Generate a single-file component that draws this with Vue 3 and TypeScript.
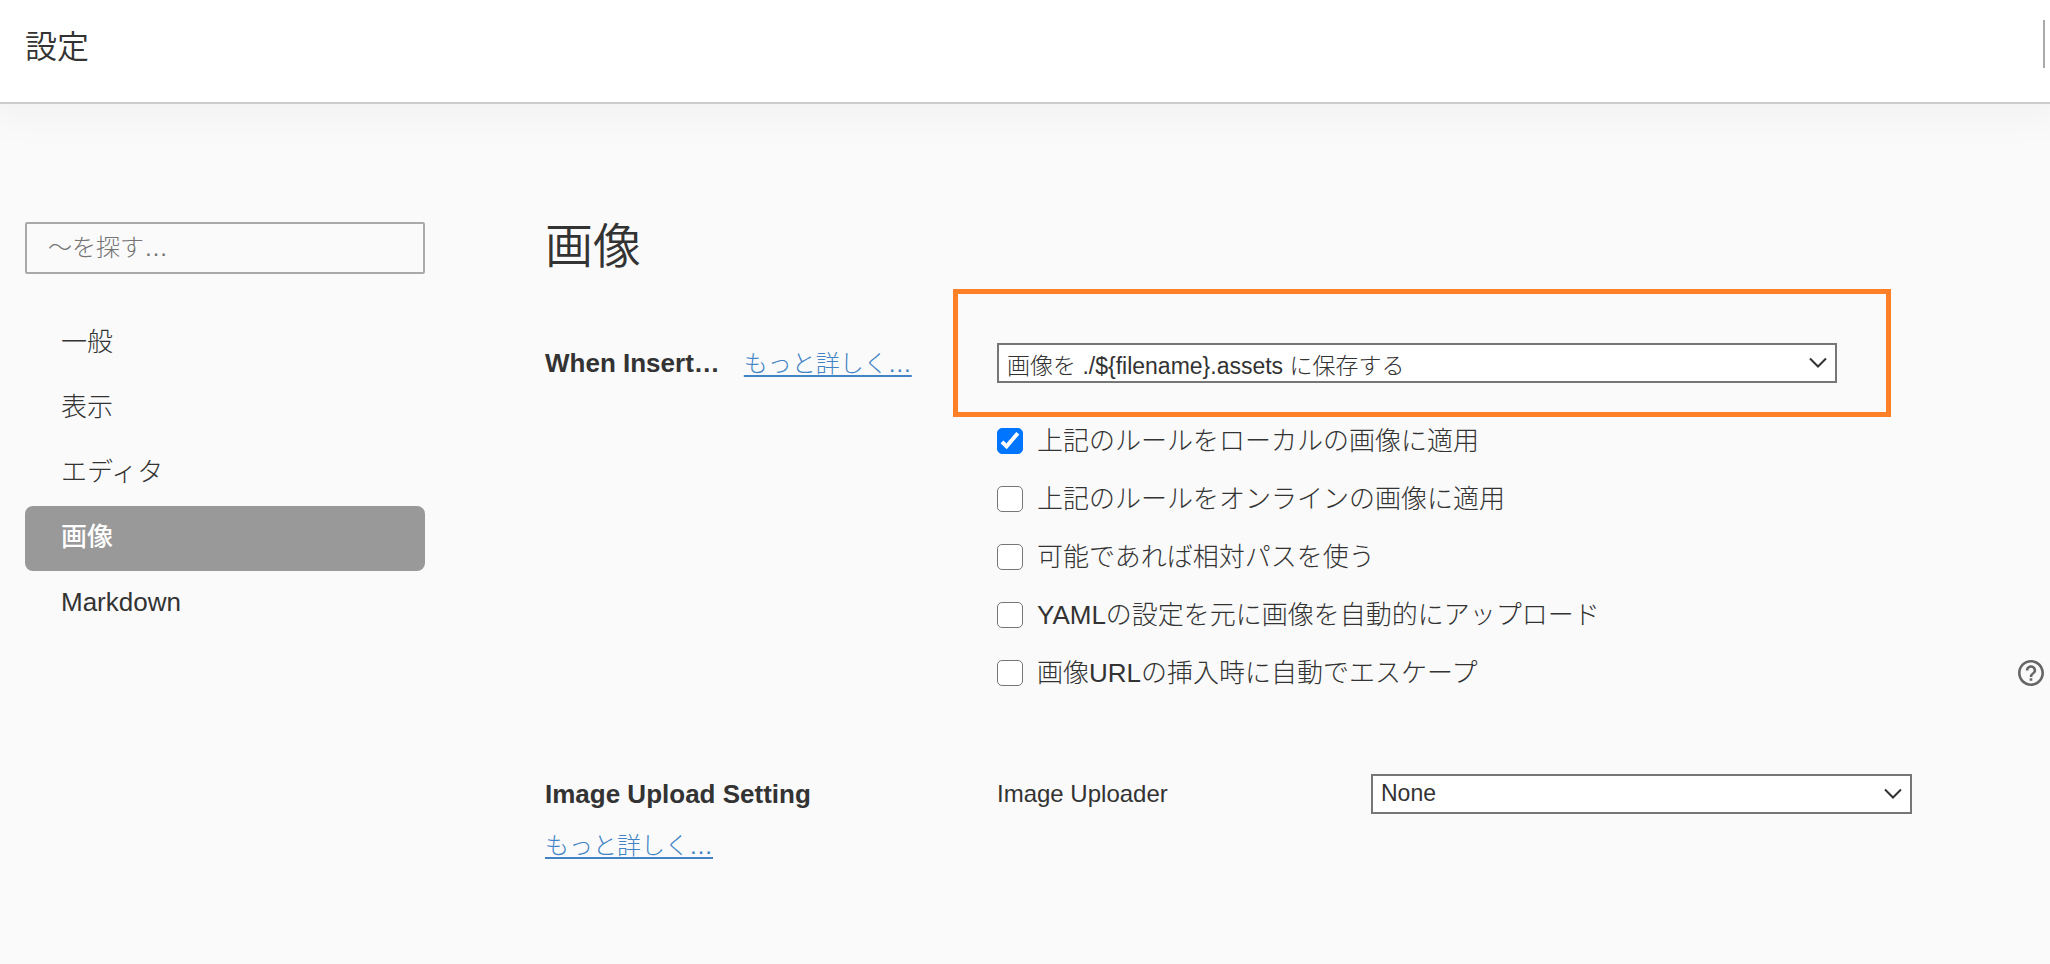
<script setup lang="ts">
import { ref } from 'vue'

interface Rule {
  id: string
  label: string
  checked: boolean
  help?: boolean
}

const navItems: string[] = ['一般', '表示', 'エディタ', '画像', 'Markdown']
const current = ref<string>('画像')
const query = ref<string>('')
const insertAction = ref<string>('assets')
const uploader = ref<string>('none')

const rules = ref<Rule[]>([
  { id: 'rule-local', label: '上記のルールをローカルの画像に適用', checked: true },
  { id: 'rule-online', label: '上記のルールをオンラインの画像に適用', checked: false },
  { id: 'rule-relative', label: '可能であれば相対パスを使う', checked: false },
  { id: 'rule-yaml', label: 'YAMLの設定を元に画像を自動的にアップロード', checked: false },
  { id: 'rule-escape', label: '画像URLの挿入時に自動でエスケープ', checked: false, help: true },
])
</script>

<template>
  <div class="page">
    <header class="topbar">
      <span class="topbar-title">設定</span>
      <span class="topbar-divider"></span>
    </header>

    <div class="body">
      <aside class="sidebar">
        <input v-model="query" class="search" type="text" placeholder="～を探す…" aria-label="～を探す…" />
        <nav class="nav">
          <button
            v-for="item in navItems"
            :key="item"
            type="button"
            class="nav-item"
            :class="{ active: item === current }"
            @click="current = item"
          >
            {{ item }}
          </button>
        </nav>
      </aside>

      <main class="content">
        <h1 class="heading">画像</h1>

        <section class="group">
          <div class="group-label inline">
            <label class="group-title" for="insert-action">When Insert…</label>
            <a class="more" href="#insert">もっと詳しく…</a>
          </div>
          <div class="group-body">
            <div class="select-box insert">
              <select id="insert-action" v-model="insertAction" class="select">
                <option value="assets">画像を ./${filename}.assets に保存する</option>
              </select>
              <svg class="chevron" viewBox="0 0 18 12" aria-hidden="true">
                <path d="M1 1.5 L9 9.5 L17 1.5" />
              </svg>
              <span class="highlight"></span>
            </div>

            <div class="rules">
              <div v-for="rule in rules" :key="rule.id" class="rule">
                <span class="check">
                  <input :id="rule.id" v-model="rule.checked" type="checkbox" class="check-input" />
                  <svg v-show="rule.checked" class="check-mark" viewBox="0 0 26 26" aria-hidden="true">
                    <path d="M5 13.8 L9.6 18.4 L20.8 5.2" />
                  </svg>
                </span>
                <label :for="rule.id">{{ rule.label }}</label>
                <button v-if="rule.help" type="button" class="help" aria-label="Help">
                  <svg viewBox="2 2 20 20" aria-hidden="true">
                    <path
                      d="M11 18h2v-2h-2v2zm1-16C6.480 2 2 6.480 2 12s4.480 10 10 10 10-4.480 10-10S17.520 2 12 2zm0 18c-4.410 0-8-3.590-8-8s3.590-8 8-8 8 3.590 8 8-3.590 8-8 8zm0-14c-2.210 0-4 1.790-4 4h2c0-1.100.9-2 2-2s2 .9 2 2c0 2-3 1.750-3 5h2c0-2.250 3-2.500 3-5 0-2.210-1.790-4-4-4z"
                    />
                  </svg>
                </button>
              </div>
            </div>
          </div>
        </section>

        <section class="group upload">
          <div class="group-label">
            <h2 class="group-title">Image Upload Setting</h2>
            <a class="more" href="#upload">もっと詳しく…</a>
          </div>
          <div class="group-body uploader-row">
            <label class="uploader-label" for="uploader">Image Uploader</label>
            <div class="select-box uploader">
              <select id="uploader" v-model="uploader" class="select">
                <option value="none">None</option>
              </select>
              <svg class="chevron" viewBox="0 0 18 12" aria-hidden="true">
                <path d="M1 1.5 L9 9.5 L17 1.5" />
              </svg>
            </div>
          </div>
        </section>
      </main>
    </div>
  </div>
</template>

<style>
body {
  background: #fafafa;
}
</style>

<style scoped>
.page,
.page * {
  box-sizing: border-box;
}

.page {
  min-height: 100vh;
  overflow-x: hidden;
  background: #fafafa;
  color: #333;
  font-family: 'Liberation Sans', 'Noto Sans CJK JP', sans-serif;
  font-size: 26px;
  font-weight: 300;
  line-height: 40px;
}

input,
select,
button {
  color: inherit;
  font: inherit;
}

.topbar {
  display: flex;
  justify-content: space-between;
  align-items: flex-start;
  height: 104px;
  padding: 20px 5px 0 25px;
  border-bottom: 2px solid #ccc;
  background: #fff;
  box-shadow: 0 0 40px 12px rgba(0, 0, 0, 0.04);
}

.topbar-title {
  font-size: 32px;
  font-weight: 350;
  line-height: 54px;
}

.topbar-divider {
  width: 2px;
  height: 48px;
  background: #aaa;
}

.body {
  display: flex;
  gap: 120px;
  padding: 118px 6px 60px 25px;
}

.sidebar {
  flex: 0 0 400px;
}

.search {
  display: block;
  width: 100%;
  height: 52px;
  padding: 0 21px;
  border: 2px solid #a9a9a9;
  border-radius: 2px;
  outline: none;
  background: transparent;
  font-size: 24px;
}

.search::placeholder {
  color: #757575;
  opacity: 1;
}

.nav {
  display: flex;
  flex-direction: column;
  margin-top: 37px;
}

.nav-item {
  height: 65px;
  padding: 0 36px 4px;
  border: 0;
  border-radius: 8px;
  background: transparent;
  text-align: left;
}

.nav-item.active {
  background: #999;
  color: #fff;
  font-weight: 500;
}

.content {
  flex: 1;
  min-width: 0;
}

.heading {
  margin: 0;
  font-size: 48px;
  font-weight: 350;
  line-height: 50px;
}

.group {
  display: flex;
  margin-top: 71px;
}

.group-label {
  flex: 0 0 452px;
}

.group-label.inline {
  display: flex;
  align-items: baseline;
  align-self: flex-start;
  gap: 24px;
}

.group-title {
  margin: 0;
  font-size: 26px;
  font-weight: 700;
  line-height: 40px;
}

.more {
  color: #4183c4;
  font-size: 24px;
  text-decoration: underline;
  text-decoration-thickness: 2px;
  text-underline-offset: 3px;
}

.group-body {
  flex: 1;
  min-width: 0;
}

.select-box {
  position: relative;
}

.select-box.insert {
  margin-right: 207px;
}

.select-box.uploader {
  flex: 1;
  margin-right: 132px;
}

.select {
  display: block;
  width: 100%;
  height: 40px;
  padding: 2px 40px 4px 8px;
  border: 2px solid #767676;
  border-radius: 0;
  appearance: none;
  background: #fff;
  font-size: 23px;
  line-height: 30px;
}

.insert .select {
  padding-top: 6px;
  padding-bottom: 0;
}

.chevron {
  position: absolute;
  top: 14px;
  right: 10px;
  width: 18px;
  height: 12px;
  fill: none;
  stroke: #333;
  stroke-width: 2;
  pointer-events: none;
}

.highlight {
  position: absolute;
  inset: -54px -54px -34px -44px;
  border: 5px solid #ff7f27;
  pointer-events: none;
}

.rules {
  display: flex;
  flex-direction: column;
  gap: 18px;
  margin-top: 38px;
}

.rule {
  display: flex;
  align-items: center;
  gap: 14px;
}

.check {
  position: relative;
  flex: none;
  width: 26px;
  height: 26px;
}

.check-input {
  display: block;
  width: 26px;
  height: 26px;
  margin: 0;
  border: 1px solid #767676;
  border-radius: 5px;
  appearance: none;
  background: #fff;
}

.check-input:checked {
  border-color: #0075ff;
  background: #0075ff;
}

.check-mark {
  position: absolute;
  inset: 0;
  fill: none;
  stroke: #fff;
  stroke-width: 4;
  pointer-events: none;
}

.help {
  display: block;
  width: 26px;
  height: 26px;
  margin-left: auto;
  padding: 0;
  border: 0;
  background: transparent;
}

.help svg {
  display: block;
  width: 26px;
  height: 26px;
  fill: #666;
}

.group.upload {
  margin-top: 81px;
}

.upload .more {
  display: inline-block;
  margin-top: 12px;
}

.uploader-row {
  display: flex;
}

.uploader-label {
  flex: 0 0 374px;
  font-size: 24px;
}
</style>
